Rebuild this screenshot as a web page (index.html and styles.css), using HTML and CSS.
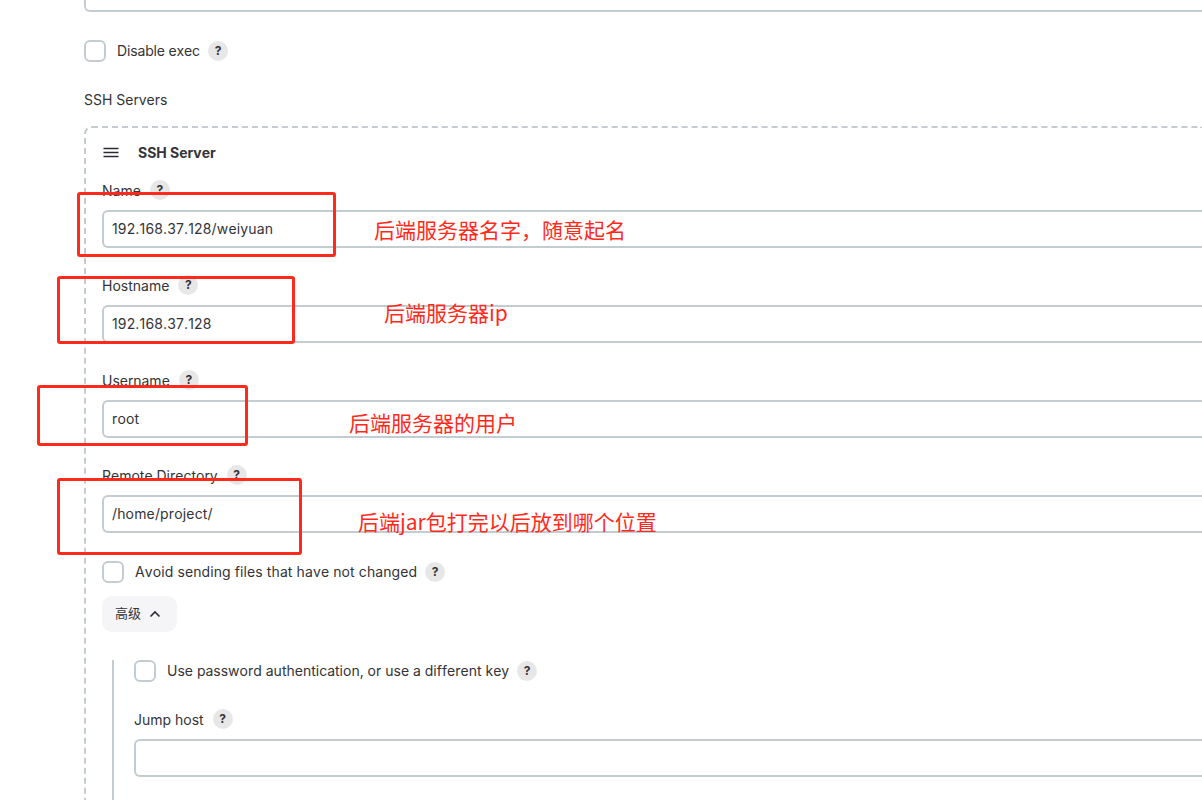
FILE: index.html
```html
<!DOCTYPE html>
<html lang="zh-CN">
<head>
<meta charset="utf-8">
<title>SSH Server</title>
<link rel="stylesheet" href="styles.css">
</head>
<body>
<main class="page">
  <div class="stub"></div>
  <div class="check-row disable-row">
    <span class="box"></span><span class="check-label">Disable exec</span><span class="help">?</span>
  </div>
  <div class="section-label">SSH Servers</div>
  <section class="repeat">
    <header class="repeat-head">
      <svg class="grip" width="16" height="16" viewBox="0 0 16 16"><path d="M0.5 4.5h15M0.5 8.5h15M0.5 12.5h15" stroke="#2b2b33" stroke-width="1.4" fill="none"/></svg>
      <span class="repeat-title">SSH Server</span>
    </header>
    <div class="field first">
      <div class="label-row"><span>Name</span><span class="help">?</span></div>
      <div class="input">192.168.37.128/weiyuan</div>
    </div>
    <div class="field">
      <div class="label-row"><span>Hostname</span><span class="help">?</span></div>
      <div class="input">192.168.37.128</div>
    </div>
    <div class="field">
      <div class="label-row"><span>Username</span><span class="help">?</span></div>
      <div class="input">root</div>
    </div>
    <div class="field">
      <div class="label-row"><span>Remote Directory</span><span class="help">?</span></div>
      <div class="input">/home/project/</div>
    </div>
    <div class="check-row avoid-row">
      <span class="box"></span><span class="check-label">Avoid sending files that have not changed</span><span class="help">?</span>
    </div>
    <button class="adv" type="button">高级
      <svg class="chev" width="12" height="8" viewBox="0 0 12 8"><path d="M1.5 6.5 6 2l4.5 4.5" stroke="#2b2b33" stroke-width="1.6" fill="none"/></svg>
    </button>
    <div class="advanced">
      <div class="check-row">
        <span class="box"></span><span class="check-label">Use password authentication, or use a different key</span><span class="help">?</span>
      </div>
      <div class="field jump">
        <div class="label-row"><span>Jump host</span><span class="help">?</span></div>
        <div class="input"></div>
      </div>
    </div>
  </section>
</main>
<div class="mark mark-1"></div>
<div class="mark mark-2"></div>
<div class="mark mark-3"></div>
<div class="mark mark-4"></div>
<div class="note note-1">后端服务器名字，随意起名</div>
<div class="note note-2">后端服务器ip</div>
<div class="note note-3">后端服务器的用户</div>
<div class="note note-4">后端jar包打完以后放到哪个位置</div>
</body>
</html>
```
FILE: styles.css
```css
* { box-sizing: border-box; }
html, body { margin: 0; height: 800px; overflow: hidden; background: #fff; }
body { position: relative; font-family: "Inter", "Noto Sans CJK SC", sans-serif; font-size: 14px; font-kerning: none; font-feature-settings: "calt" 0; color: #333338; }
.page { height: 800px; padding-left: 84px; overflow: hidden; }
.stub { height: 12px; border: 2px solid #c3ccd1; border-top: 0; border-right: 0; border-radius: 0 0 0 6px; }
.check-row { display: flex; align-items: center; height: 22px; }
.disable-row { margin-top: 28px; }
.disable-row .check-label { letter-spacing: -0.15px; }
.box { width: 22px; height: 22px; border: 2px solid #c3ccd1; border-radius: 6px; flex: none; }
.check-label { margin-left: 11px; margin-bottom: 2px; }
.help { width: 20px; height: 20px; flex: none; margin-left: 8px; border-radius: 50%; background: #e7e7e8; font-size: 12px; font-weight: 700; line-height: 20px; text-align: center; color: #333338; }
.section-label { margin-top: 28px; line-height: 20px; }
.repeat { margin-top: 16px; height: 720px; border: 2px dashed #c3ccd1; border-right: 0; border-bottom: 0; border-radius: 8px 0 0 0; padding-left: 16px; }
.repeat-head { display: flex; align-items: center; height: 20px; margin-top: 14px; }
.grip { margin-left: 1px; }
.repeat-title { margin-left: 19px; font-weight: 700; }
.field { margin-top: 27px; }
.field.first { margin-top: 18px; }
.label-row { display: flex; align-items: center; height: 20px; }
.label-row .help { margin-left: 9px; }
.input { height: 38px; margin-top: 10px; padding-left: 8px; border: 2px solid #c3ccd1; border-right: 0; border-radius: 6px 0 0 6px; line-height: 34px; letter-spacing: 0.15px; }
.avoid-row { margin-top: 28px; }
.avoid-row .check-label { letter-spacing: 0.1px; }
.adv { display: flex; align-items: center; gap: 8px; width: 75px; height: 36px; margin-top: 13px; padding: 0 0 3px 13px; border: 0; border-radius: 10px; background: #f5f5f7; font: inherit; font-size: 13px; color: inherit; }
.chev { margin-top: 2px; }
.advanced { margin: 28px 0 0 10px; height: 200px; padding-left: 20px; border-left: 2px solid #c3ccd1; }
.jump { margin-top: 27px; }
.mark { position: absolute; border: 3px solid #ff2a1c; border-radius: 3px; }
.mark-1 { left: 77px; top: 192px; width: 259px; height: 65px; }
.mark-2 { left: 57px; top: 276px; width: 238px; height: 68px; }
.mark-3 { left: 37px; top: 385px; width: 211px; height: 61px; }
.mark-4 { left: 57px; top: 478px; width: 245px; height: 77px; }
.note { position: absolute; font-family: "Noto Sans CJK SC", sans-serif; font-size: 21px; line-height: 30px; color: #ff2a1c; white-space: nowrap; }
.note-1 { left: 374px; top: 214px; }
.note-2 { left: 384px; top: 297px; }
.note-3 { left: 349px; top: 407px; }
.note-4 { left: 358px; top: 506px; }
```
